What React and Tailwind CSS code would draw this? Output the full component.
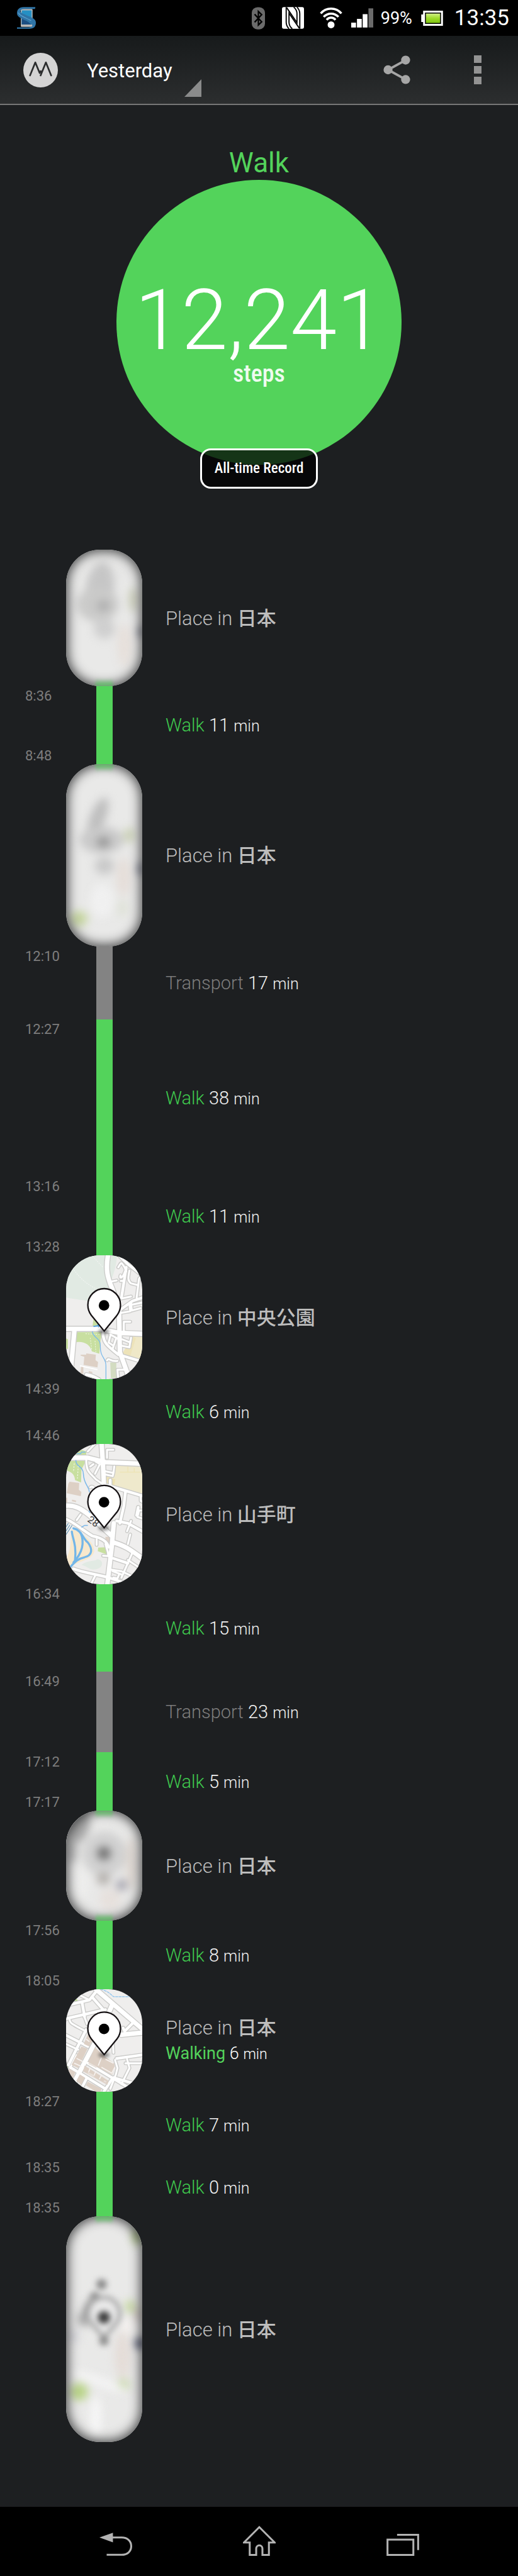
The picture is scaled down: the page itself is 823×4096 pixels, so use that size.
import React from "react";

const KIND_COLOR = {
  walk: { bar: "bg-[#53d35b]", text: "text-[#3fc94e]" },
  transport: { bar: "bg-[#838383]", text: "text-[#7d7d7d]" },
};

/* ---------- status bar icons ---------- */

function SyncLogo() {
  return (
    <svg viewBox="0 0 40 46" className="w-[30px] h-[35px]" aria-hidden="true">
      <rect x="8" y="4" width="25" height="38" rx="2" fill="#b9b9b9" />
      <rect x="10" y="7" width="21" height="30" fill="#2590c4" />
      <path d="M10 20L31 37H10Z" fill="#1d4f82" />
      <path d="M39 0H14C4 0 0 6 0 13c0 7 7 10 17 15 9 4 15 7 16 12-2 2-5 3-8 3H0v3H26C36 46 40 41 40 33 40 26 34 23 24 19 13 14 7 12 7 9 8 5 11 4 16 4H38Z" fill="#2f74a6" />
      <path d="M3 12C6 20 20 22 30 29" fill="none" stroke="#5fa6d2" strokeWidth="1.500" />
    </svg>
  );
}

function BluetoothIcon() {
  return (
    <svg viewBox="0 0 28 47" className="w-[21px] h-[36px]" aria-hidden="true">
      <rect width="28" height="47" rx="12" fill="#6b6b6b" />
      <path d="M6 15L21 31 14 38V9l7 7L6 32" fill="none" stroke="#000" strokeWidth="3" />
    </svg>
  );
}

function NfcIcon() {
  return (
    <svg viewBox="0 0 47 46" className="w-[35px] h-[35px]" aria-hidden="true">
      <rect width="47" height="46" rx="4" fill="#fff" />
      <g fill="none" stroke="#000" strokeWidth="2.500">
        <path d="M15 46C11 42 9 38 9 32V0" />
        <path d="M32 0C36 4 38 8 38 14V46" />
        <path d="M10 1L32 33V14C32 8 30 4 25 0" />
        <path d="M37 45L15 13V32C15 38 17 42 22 46" />
      </g>
    </svg>
  );
}

function WifiIcon() {
  return (
    <svg viewBox="0 0 46 42" className="w-[36px] h-[33px]" aria-hidden="true">
      <g fill="none" stroke="#fff" strokeWidth="4.500">
        <path d="M2 12C13-1 33-1 44 12" />
        <path d="M8 19c8-9 22-9 30 0" />
        <path d="M14 25c5-6 13-6 18 0" />
      </g>
      <circle cx="23" cy="35" r="7" fill="#fff" />
    </svg>
  );
}

function SignalIcon() {
  return (
    <svg viewBox="0 0 46 40" className="w-[35px] h-[31px]" aria-hidden="true">
      <path d="M0 30h10V40H0ZM12 22h10V40H12ZM24 12h10V40H24Z" fill="#fff" />
      <path d="M36 0h10V40H36Z" fill="#6b6b6b" />
    </svg>
  );
}

function BatteryIcon() {
  return (
    <svg viewBox="0 0 46 32" className="w-[35px] h-[24px]" aria-hidden="true">
      <defs>
        <linearGradient id="charge" x1="0" y1="0" x2="0" y2="1">
          <stop offset="0" stopColor="#d3f088" />
          <stop offset="0.5" stopColor="#9fdc2c" />
          <stop offset="1" stopColor="#7fc510" />
        </linearGradient>
      </defs>
      <path d="M0 8H4V0H46V32H4V24H0Z" fill="#fff" />
      <path d="M8 4H42V28H8Z" fill="#000" />
      <path d="M10 6H40V26H10Z" fill="url(#charge)" />
    </svg>
  );
}

function StatusBar() {
  return (
    <div className="flex h-[57px] items-center bg-black pl-[27px] pr-[14px] text-white">
      <SyncLogo />
      <div className="ml-auto flex items-center">
        <BluetoothIcon />
        <span className="ml-[27px] flex"><NfcIcon /></span>
        <span className="ml-[25px] flex"><WifiIcon /></span>
        <span className="ml-[14px] flex"><SignalIcon /></span>
        <span className="ml-3 text-[27px] leading-8">99%</span>
        <span className="ml-[14px] flex"><BatteryIcon /></span>
        <span className="ml-[18px] text-[35px] leading-[44px]">13:35</span>
      </div>
    </div>
  );
}

/* ---------- action bar ---------- */

function Header() {
  return (
    <header className="flex h-[110px] items-center border-b-2 border-[#777] bg-linear-to-b from-[#171a1b] to-[#2c2e2f] pl-[37px] pr-[58px]">
      <svg viewBox="0 0 72 72" className="size-[55px]" aria-hidden="true">
        <circle cx="36" cy="36" r="36" fill="#d4d4d4" />
        <path d="M14 47L25 20 34 42M36 47L47 20 58 47M34 42L36 38" fill="none" stroke="#2b2d2e" strokeWidth="3.500" strokeLinecap="round" strokeLinejoin="round" />
      </svg>
      <button className="ml-[46px] flex h-[86px] w-[182px] items-center justify-between text-[31px] text-white">
        <span className="pt-1">Yesterday</span>
        <svg viewBox="0 0 27 28" className="h-7 w-[27px] self-end" aria-hidden="true">
          <path d="M27 0V28H0Z" fill="#8a8b8b" />
        </svg>
      </button>
      <button aria-label="Share" className="ml-auto">
        <svg viewBox="0 0 57 61" className="h-[46px] w-[43px]" aria-hidden="true">
          <path d="M47 10L10 30.500 47 51" fill="none" stroke="#a6a6a6" strokeWidth="5" />
          <g fill="#a6a6a6">
            <circle cx="47" cy="10" r="9.500" />
            <circle cx="10" cy="30.500" r="9.500" />
            <circle cx="47" cy="51" r="9.500" />
          </g>
        </svg>
      </button>
      <button aria-label="More options" className="ml-[101px] flex flex-col gap-[5px]">
        <span className="size-3 bg-[#939393]" />
        <span className="size-3 bg-[#939393]" />
        <span className="size-3 bg-[#939393]" />
      </button>
    </header>
  );
}

/* ---------- daily total ---------- */

function Summary() {
  return (
    <section className="flex flex-col items-center pb-[135px] pt-[66px]">
      <h1 className="text-[44px] leading-[53px] text-[#53d35b]">Walk</h1>
      <div className="relative flex size-[453px] flex-col items-center rounded-full bg-[#53d35b] pt-[164px] text-white">
        <span className="text-[133px] font-light leading-[120px]">12,241</span>
        <span className="mt-1 font-['Roboto_Condensed',Roboto,sans-serif] text-[38px] font-medium leading-10 text-white/90">steps</span>
        <div className="absolute -bottom-[38px] flex h-16 w-[187px] items-center justify-center rounded-[17px] border-3 border-white bg-black/75 font-['Roboto_Condensed',Roboto,sans-serif] text-[23px] font-medium">
          All-time Record
        </div>
      </div>
    </section>
  );
}

/* ---------- map thumbnails ---------- */

function Roads({ wide = "", mid = "", thin = "" }) {
  return (
    <g fill="none" strokeLinecap="round" strokeLinejoin="round">
      <g stroke="#cbcbc9">
        <path d={thin} strokeWidth="23" />
        <path d={mid} strokeWidth="28" />
        <path d={wide} strokeWidth="39" />
      </g>
      <g stroke="#fff">
        <path d={thin} strokeWidth="12" />
        <path d={mid} strokeWidth="17" />
        <path d={wide} strokeWidth="28" />
      </g>
    </g>
  );
}

function Pin({ dy }) {
  return (
    <g transform={`translate(0 ${dy})`}>
      <ellipse cx="290" cy="530" rx="34" ry="16" fill="#000" opacity="0.45" className="blur-[10px]" />
      <path d="M292 528L212 430C197 410 190 390 190 365A102 102 0 0 1 394 365C394 390 387 410 372 430Z" fill="#fff" stroke="#161214" strokeWidth="9" />
      <circle cx="291" cy="368" r="33" fill="#000" />
    </g>
  );
}

function ParkMap() {
  return (
    <svg viewBox="54 53 476 778" preserveAspectRatio="xMidYMid slice" className="size-full" aria-hidden="true">
      <path d="M54 53H530V831H54Z" fill="#efeeed" />
      <path d="M54 53H372C370 110 355 160 340 200L300 330 190 342C150 330 100 330 54 318Z" fill="#e1eae3" />
      <path d="M95 135C140 200 190 240 240 262M220 60L285 130" fill="none" stroke="#f3f6f3" strokeWidth="4" strokeDasharray="8 6" />
      <path d="M470 560H530V712L405 670Z" fill="#efe8c8" />
      <path d="M470 560L490 575 455 685 405 670Z" fill="#ede3b9" />
      <path d="M225 455L265 500V530H215ZM118 535H285L270 580 262 670 215 655C205 610 160 590 118 598ZM54 575L66 580V640H54Z" fill="#c8dfa0" />
      <path d="M330 725H368V822H334Z" fill="#d3dcc1" />
      <path d="M175 545L270 550M205 570L215 650M235 590L240 660" fill="none" stroke="#eef5e2" strokeWidth="4" strokeDasharray="9 7" />
      <path d="M145 676H180V668L240 676 238 710 254 722 250 756 163 740 168 690 145 682ZM148 752H162V796H144ZM196 778L218 784V794L196 788Z" fill="#ddd0c5" />
      <Roads
        thin="M340 218L370 212M380 130C400 100 395 90 420 130L430 155M394 180C385 205 410 195 420 160M450 150C440 200 440 215 460 230L500 240M530 180L510 200 495 320M395 215H410M400 325L460 312M460 350L465 400 520 385M530 350L470 362M395 415L455 405 450 360M415 540V470H455M330 560L320 600 350 620M345 640L365 580M405 580L455 600 460 570M400 620L450 630 455 590M310 712C320 690 330 722 375 715M380 770H430V830M375 770L380 830M330 550L375 575"
        mid="M390 60L440 110 530 180M430 130L400 320M400 390L470 340 530 320M285 540C285 600 310 620 380 675L530 720M180 800C220 805 230 815 260 831"
        wide="M318 40C300 140 310 190 345 270L385 390 390 660 440 800M54 515H260L390 540 530 546M106 525L85 760"
      />
      <path d="M140 745L250 770" stroke="#fff" strokeWidth="7" />
      <path d="M225 500L250 496 257 484V505" fill="none" stroke="#4f9fe0" strokeWidth="7" />
      <path d="M218 530C220 570 270 570 268 620C266 700 305 690 303 750V831" fill="none" stroke="#7ab8ea" strokeWidth="5" />
      <Pin dy={0} />
    </svg>
  );
}

function RiverMap() {
  return (
    <svg viewBox="54 63 476 879" preserveAspectRatio="xMidYMid slice" className="size-full" aria-hidden="true">
      <path d="M54 63H530V942H54Z" fill="#efeeed" />
      <path d="M365 192L530 208V375L302 308Z" fill="#efe9cc" />
      <path d="M300 265L362 285 355 322 302 308Z" fill="#eee3b3" />
      <path d="M390 240H520M440 205V240M480 215V240" fill="none" stroke="#ede3b3" strokeWidth="5" />
      <path d="M120 120L150 100 180 110V150H110ZM54 170H178L150 225 148 305 110 290C108 250 80 235 54 230Z" fill="#c8dfa0" />
      <path d="M255 712L300 710 318 758 252 735Z" fill="#c8dfa0" />
      <path d="M105 185L100 240M130 200L125 280" fill="none" stroke="#eef5e2" strokeWidth="5" strokeDasharray="10 8" />
      <path d="M68 312L76 300 136 308 134 350 150 365 146 390 58 372ZM92 412L116 418V428L90 422ZM54 400H62V430H54ZM300 645H332V710L314 700 312 668 300 664Z" fill="#ddd0c5" />
      <path d="M150 820C190 790 230 800 250 785C290 790 290 840 240 848C200 855 190 830 150 820Z" fill="#e1eae3" />
      <path d="M85 600C140 600 235 680 230 735C220 790 150 790 85 830L54 840V780C80 740 85 690 85 600Z" fill="#f7e8cc" />
      <Roads
        thin="M235 63L190 110M310 150V100H350M180 160C180 240 200 240 240 285L290 320M205 205L225 190M235 250L265 190 240 175M300 235L350 245 355 205M350 245L345 265 300 255M205 335C220 320 240 350 250 360M120 540L145 505M245 660V695M300 690L315 740 318 765 285 763M460 545L435 610M455 630L440 690M530 480H510L500 520 530 530M470 740L400 900M440 790L530 850M345 860L400 880M350 900L375 905 385 880M320 848L400 860 530 920M210 940L240 880M520 385V420L530 425"
        mid="M310 322L530 388M425 365L415 450 390 560M370 545L440 560 530 610M54 535C100 550 180 620 220 640C270 650 310 670 320 710M100 845C160 870 260 880 320 900L440 940M350 780L440 810M330 290L330 322M505 460L495 510"
        wide="M275 50L285 200 290 310M54 150H190L300 178 530 188M54 450C110 445 150 470 200 510L340 640M352 560L340 700 312 942M350 680C420 700 450 720 530 780"
      />
      <path d="M120 125H145L150 115H175M115 165C115 210 160 200 162 250C165 320 195 320 200 365M197 480L202 495M150 585L170 573H190" fill="none" stroke="#7ab8ea" strokeWidth="6" />
      <g fill="none" stroke="#73b6e8" strokeWidth="13" strokeLinecap="round">
        <path d="M100 592C150 600 160 660 190 680C220 720 220 760 170 772C130 780 110 800 82 832" />
        <path d="M90 612C95 660 120 690 110 790" />
        <path d="M145 620C170 680 160 740 100 805" />
      </g>
      <path d="M54 582L68 560M54 630L92 572M54 608L78 570" stroke="#5b93b8" strokeWidth="4" />
      <text x="184" y="546" transform="rotate(36 184 546)" fontSize="62" fill="#3c3c3c" className="font-['Roboto']">28</text>
      <Pin dy={60} />
    </svg>
  );
}

function TownMap() {
  return (
    <svg viewBox="54 28 476 640" preserveAspectRatio="xMidYMid slice" className="size-full" aria-hidden="true">
      <path d="M54 28H530V668H54Z" fill="#efeeed" />
      <path d="M100 110L118 88 132 102ZM54 490L66 505V520H54Z" fill="#b8d68c" />
      <Roads
        thin="M75 205C75 240 80 240 180 292M110 50L200 95M165 190L185 245M345 340L350 425M360 470L375 520 365 560 330 650M435 465L450 520 400 620M425 490H530M54 370L130 405M120 440L80 520"
        mid="M54 130L200 95 240 45M155 115L170 200M54 212L300 155M215 75L290 160M54 315L190 385M80 515L300 650M370 460L530 438M190 490L440 640M215 400L170 490M180 280L70 500M290 668L340 590M410 270L420 290 475 235M180 590L140 668M350 580L490 620"
        wide="M240 28L540 285M340 130L325 165M400 312L540 298M230 370L110 600"
      />
      <g fill="#ddd0c5">
        <path d="M190 310L218 350 198 385 165 370ZM150 385L188 400 130 520 88 500ZM75 525L112 545 95 590 60 560ZM140 560L172 580 150 625 118 600Z" />
        <path d="M235 390L292 445 355 490 358 520 342 562 192 482Z" />
        <path d="M170 505L320 600 312 625 160 540ZM190 605L275 650 270 668H240L178 628Z" />
      </g>
      <path d="M275 455L255 505M275 515L340 552 358 515M300 465L350 490M205 520L195 545M240 540L228 570M275 565L262 590M105 490L150 510M120 460L160 480M180 340L200 355" fill="none" stroke="#f6f2ef" strokeWidth="7" />
      <path d="M195 490L245 515M190 550L230 570M290 600L305 608" fill="none" stroke="#e9e1da" strokeWidth="10" />
      <path d="M270 28C320 40 330 60 352 75H455" fill="none" stroke="#8cc3ee" strokeWidth="5" strokeDasharray="18 3" />
      <Pin dy={-92} />
    </svg>
  );
}

/* Soft-focus map used for places whose location is hidden. */
function HiddenMap({ height, blobs, ring, cap }) {
  return (
    <div className="relative size-full overflow-hidden bg-[#e9e9e8]">
      <svg viewBox={`0 0 159 ${height}`} preserveAspectRatio="xMidYMid slice" className="size-full" aria-hidden="true">
        <g className="blur-[9px]">
          {blobs.map(([cx, cy, rx, ry, fill, turn = 0], i) => (
            <ellipse key={i} cx={cx} cy={cy} rx={rx} ry={ry} fill={fill} transform={`rotate(${turn} ${cx} ${cy})`} />
          ))}
        </g>
        {ring && (
          <g className="blur-[6px]">
            <circle cx="74" cy="142" r="11" fill="#8a8a8a" />
            <ellipse cx="60" cy="170" rx="10" ry="13" fill="#939393" />
            <path d="M79 254L56 226A33 33 0 1 1 102 226Z" fill="#e9e9e9" stroke="#a6a6a6" strokeWidth="8" />
            <circle cx="79" cy="211" r="13" fill="#3c3c3c" />
            <circle cx="79" cy="260" r="10" fill="#8b8b8b" />
          </g>
        )}
      </svg>
      <div className="absolute inset-0 rounded-[54px] shadow-[inset_0_0_18px_3px_rgba(30,31,33,0.8)]" />
      {cap.includes("top") && <div className="absolute inset-x-[47px] top-0 h-3 bg-linear-to-b from-[#53d35b]/80 to-transparent blur-[2px]" />}
      {cap.includes("bottom") && <div className="absolute inset-x-[47px] bottom-0 h-3 bg-linear-to-t from-[#53d35b]/80 to-transparent blur-[2px]" />}
    </div>
  );
}

const MAPS = {
  home: (
    <HiddenMap
      height={286}
      cap="bottom"
      blobs={[
        [70, 85, 30, 60, "#c6c6c6", 8],
        [66, 115, 44, 36, "#cacac9"],
        [78, 118, 14, 12, "#b0b0b0"],
        [80, 165, 22, 22, "#cfcfcf"],
        [140, 105, 10, 26, "#cdd0bd"],
        [122, 200, 14, 45, "#e6dfda"],
        [157, 172, 8, 12, "#8a8d98"],
        [118, 45, 22, 18, "#e6e6e5"],
      ]}
    />
  ),
  noon: (
    <HiddenMap
      height={380}
      cap="top"
      blobs={[
        [66, 112, 16, 45, "#bebebe", 22],
        [74, 158, 46, 28, "#c9c9c9"],
        [78, 163, 14, 11, "#969696"],
        [80, 212, 20, 18, "#c9c9c9"],
        [132, 148, 12, 16, "#ccd2b8"],
        [120, 235, 14, 40, "#e5ddd8"],
        [156, 218, 8, 14, "#858998"],
        [27, 322, 18, 16, "#c5d59f"],
        [118, 300, 12, 18, "#dfe2d8"],
        [75, 285, 25, 35, "#f0f0f0"],
      ]}
    />
  ),
  evening: (
    <HiddenMap
      height={229}
      cap="top bottom"
      blobs={[
        [26, 34, 22, 36, "#a9a9a9", 20],
        [12, 80, 12, 30, "#b9b9b9"],
        [80, 90, 46, 46, "#d0d0d0"],
        [79, 89, 14, 14, "#707070"],
        [78, 142, 14, 13, "#b4b0ac"],
        [116, 155, 12, 12, "#a6a5b0"],
        [136, 110, 12, 55, "#ded7d1"],
        [92, 185, 22, 22, "#e6e0dc"],
        [30, 150, 18, 35, "#ededec"],
      ]}
    />
  ),
  night: (
    <HiddenMap
      height={471}
      cap="top"
      ring
      blobs={[
        [148, 42, 10, 18, "#a9be83"],
        [38, 215, 14, 14, "#a3a3a3", 30],
        [48, 192, 10, 24, "#9b9b9b", 28],
        [134, 188, 12, 13, "#c6d8a2"],
        [150, 205, 8, 14, "#cfc4bd"],
        [128, 230, 14, 18, "#f3f0ee"],
        [155, 265, 12, 12, "#50566e"],
        [118, 290, 16, 50, "#e4dcd7"],
        [27, 366, 19, 18, "#b9d487"],
        [120, 352, 13, 13, "#cbdab0"],
        [16, 250, 12, 14, "#d5d5da"],
        [70, 345, 60, 10, "#f4f4f4", 20],
        [62, 420, 12, 45, "#f6f6f6"],
      ]}
    />
  ),
  park: <ParkMap />,
  river: <RiverMap />,
  town: <TownMap />,
};

/* ---------- timeline ---------- */

const EVENTS = [
  { h: "h-[217px]", map: "home", place: "日本" },
  { h: "h-[124px]", kind: "walk", label: "Walk", min: 11, start: "8:36", end: "8:48" },
  { h: "h-[290px]", map: "noon", place: "日本" },
  { h: "h-[116px]", kind: "transport", label: "Transport", min: 17, start: "12:10" },
  { h: "h-[250px]", kind: "walk", label: "Walk", min: 38, start: "12:27" },
  { h: "h-[125px]", kind: "walk", label: "Walk", min: 11, start: "13:16", end: "13:28" },
  { h: "h-[197px]", map: "park", place: "中央公園" },
  { h: "h-[103px]", kind: "walk", label: "Walk", min: 6, start: "14:39", end: "14:46" },
  { h: "h-[223px]", map: "river", place: "山手町" },
  { h: "h-[139px]", kind: "walk", label: "Walk", min: 15, start: "16:34" },
  { h: "h-[128px]", kind: "transport", label: "Transport", min: 23, start: "16:49" },
  { h: "h-[93px]", kind: "walk", label: "Walk", min: 5, start: "17:12", end: "17:17" },
  { h: "h-[175px]", map: "evening", place: "日本" },
  { h: "h-[109px]", kind: "walk", label: "Walk", min: 8, start: "17:56", end: "18:05" },
  { h: "h-[163px]", map: "town", place: "日本", walking: 6 },
  { h: "h-[105px]", kind: "walk", label: "Walk", min: 7, start: "18:27" },
  { h: "h-[93px]", kind: "walk", label: "Walk", min: 0, start: "18:35", end: "18:35" },
  { h: "h-[359px]", map: "night", place: "日本" },
];

function Place({ event }) {
  return (
    <>
      <div className="h-full overflow-hidden rounded-[54px]">{MAPS[event.map]}</div>
      <div className="flex flex-col justify-center pl-[37px] pt-0.5">
        <p className="text-[31px] font-light leading-10 text-[#bdbdbd]">
          Place in <span className="font-medium">{event.place}</span>
        </p>
        {event.walking && (
          <p className="text-[27px] leading-10 text-[#53d35b]">
            Walking <span className="font-light text-white">{event.walking} <span className="text-[23px]">min</span></span>
          </p>
        )}
      </div>
    </>
  );
}

function Move({ event }) {
  const color = KIND_COLOR[event.kind];
  return (
    <>
      <div className={`h-full w-[26px] justify-self-center ${color.bar}`} />
      <p className={`self-center pl-[37px] pt-0.5 text-[29px] font-light leading-9 ${color.text}`}>
        {event.label}{" "}
        <span className="text-[#f2f2f2]">
          {event.min} <span className="text-[25px]">min</span>
        </span>
      </p>
    </>
  );
}

function Timeline() {
  return (
    <ol className="pb-[103px]">
      {EVENTS.map((event, i) => (
        <li key={i} className={`grid grid-cols-[105px_121px_1fr] ${event.h}`}>
          <div className="flex flex-col justify-between pb-px pl-10 pt-1 text-[22px] leading-6 text-[#7d7d7d]">
            {event.start && <time>{event.start}</time>}
            {event.end && <time>{event.end}</time>}
          </div>
          {event.map ? <Place event={event} /> : <Move event={event} />}
        </li>
      ))}
    </ol>
  );
}

/* ---------- navigation bar ---------- */

function NavBar() {
  return (
    <nav className="flex h-[110px] items-stretch justify-center bg-black text-[#b3b3b3]">
      <button aria-label="Back" className="flex w-[228px] items-end justify-center pb-8">
        <svg viewBox="0 0 68 48" className="h-[37px] w-[52px]" aria-hidden="true">
          <path d="M0 10L28 0V20Z" fill="currentColor" />
          <path d="M26 10H46C59 10 66 18 66 28S59 46 46 46H15" fill="none" stroke="currentColor" strokeWidth="4" />
        </svg>
      </button>
      <button aria-label="Home" className="flex w-[228px] items-end justify-center pb-8">
        <svg viewBox="0 0 68 63" className="h-12 w-[52px]" aria-hidden="true">
          <path d="M34 3L2 35H14V61H27.500V48a6.500 7 0 0 1 13 0V61H54V35H66Z" fill="none" stroke="currentColor" strokeWidth="4" />
        </svg>
      </button>
      <button aria-label="Recent apps" className="flex w-[228px] items-end justify-center pb-8">
        <svg viewBox="0 0 68 46" className="h-[35px] w-[52px]" aria-hidden="true">
          <rect x="2" y="12" width="54" height="32" fill="none" stroke="currentColor" strokeWidth="4" />
          <path d="M22 2H66V34" fill="none" stroke="currentColor" strokeWidth="4" />
        </svg>
      </button>
    </nav>
  );
}

export default function App() {
  return (
    <div lang="ja" className="min-h-screen bg-[#1d1f21] font-['Roboto','Noto_Sans_CJK_JP',sans-serif]">
      <StatusBar />
      <Header />
      <main>
        <Summary />
        <Timeline />
      </main>
      <NavBar />
    </div>
  );
}
